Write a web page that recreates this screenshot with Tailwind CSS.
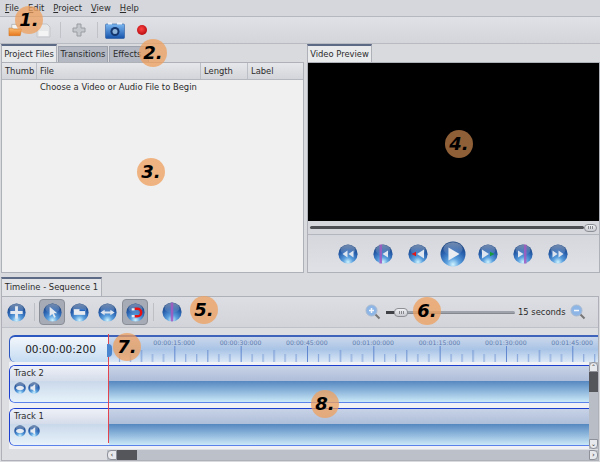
<!DOCTYPE html>
<html lang="en">
  <head>
    <meta charset="UTF-8" />
    <title>Timeline Editor</title>
    <script src="https://cdn.jsdelivr.net/npm/@tailwindcss/browser@4"></script>
  </head>
  <body class="m-0">
    <!-- shared icons -->
    <svg class="absolute w-0 h-0" aria-hidden="true">
      <defs>
        <radialGradient id="ballFill" cx="50%" cy="92%" r="85%">
          <stop offset="0" stop-color="#d0f4ff" />
          <stop offset="0.3" stop-color="#5ba0de" />
          <stop offset="0.68" stop-color="#2a62b0" />
          <stop offset="1" stop-color="#16407f" />
        </radialGradient>
        <linearGradient id="ballShine" x1="0" y1="0" x2="0" y2="1">
          <stop offset="0" stop-color="#fff" stop-opacity="0.4" />
          <stop offset="1" stop-color="#fff" stop-opacity="0.03" />
        </linearGradient>
        <linearGradient id="folderFill" x1="0" y1="0" x2="0" y2="1">
          <stop offset="0" stop-color="#fbbf72" />
          <stop offset="1" stop-color="#e8761c" />
        </linearGradient>
        <linearGradient id="cameraFill" x1="0" y1="0" x2="0" y2="1">
          <stop offset="0" stop-color="#7db8f0" />
          <stop offset="1" stop-color="#1553ab" />
        </linearGradient>
        <radialGradient id="recordFill" cx="45%" cy="40%" r="60%">
          <stop offset="0" stop-color="#f44" />
          <stop offset="1" stop-color="#b80c10" />
        </radialGradient>
        <pattern id="rulerTicks" x="0" y="0" width="66.33" height="16" patternUnits="userSpaceOnUse">
          <path d="M0.5 0V16" stroke="#5f86cf" />
          <path d="M11.5 8V16M22.5 8V16M44.5 8V16M55.5 8V16" stroke="#7c9ed8" />
          <path d="M33.5 4V16" stroke="#6c92d2" />
        </pattern>
        <symbol id="ball" viewBox="0 0 20 20">
          <circle cx="10" cy="10" r="9.6" fill="url(#ballFill)" />
          <ellipse cx="10" cy="6" rx="7.5" ry="5" fill="url(#ballShine)" />
        </symbol>
      </defs>
    </svg>

    <div class="relative w-[600px] h-[462px] overflow-hidden bg-[#d8dade] text-[#2b2b2b] text-[8.4px] leading-none whitespace-nowrap font-['DejaVu_Sans',sans-serif]">
      <!-- menu -->
      <div class="h-[17px] flex items-center pl-[5px] gap-[9px] bg-[#d5d7dc] border-b border-[#b5b8be]">
        <span><u>F</u>ile</span>
        <span><u>E</u>dit</span>
        <span><u>P</u>roject</span>
        <span><u>V</u>iew</span>
        <span><u>H</u>elp</span>
      </div>

      <!-- main toolbar -->
      <div class="h-[27px] flex items-center pl-[8px] border-b border-[#b8bbc1] bg-gradient-to-b from-[#dfe1e6] to-[#d3d5da]">
        <svg class="w-[15px] h-[14px]" viewBox="0 0 16 14">
          <path d="M4 1h5l1 2h3v3H4z" fill="#f4f4f2" stroke="#999" stroke-width="0.6" />
          <path d="M1 5h4l1 1h8.500l-1.500 7H1z" fill="url(#folderFill)" stroke="#c8701c" stroke-width="0.5" />
        </svg>
        <svg class="ml-[13px] w-[15px] h-[15px]" viewBox="0 0 15 15">
          <path d="M1 1h10l3 3v10H1z" fill="#e6e7e9" stroke="#c3c5c9" />
          <path d="M3 8h9v5H3z" fill="#f4f4f5" />
        </svg>
        <div class="ml-[9px] w-px h-[16px] bg-[#bfc2c8]"></div>
        <svg class="ml-[11px] w-[14px] h-[14px]" viewBox="0 0 14 14">
          <path d="M5 1h4v4h4v4H9v4H5V9H1V5h4z" fill="#c4c7cb" stroke="#9a9da3" />
        </svg>
        <div class="ml-[11px] w-px h-[16px] bg-[#bfc2c8]"></div>
        <svg class="ml-[7px] w-[20px] h-[17px]" viewBox="0 0 20 17">
          <rect x="0.500" y="2" width="19" height="14.500" rx="1" fill="url(#cameraFill)" stroke="#1b4c97" stroke-width="0.5" />
          <rect x="3" y="0.500" width="4" height="2" fill="#eef2f8" />
          <rect x="12" y="0.500" width="5" height="2" fill="#eef2f8" />
          <circle cx="10" cy="9.500" r="4.500" fill="#14366f" />
          <circle cx="10" cy="9.500" r="2.500" fill="#8db3d9" />
        </svg>
        <svg class="ml-[12px] w-[10px] h-[10px]" viewBox="0 0 10 10">
          <circle cx="5" cy="5" r="5" fill="url(#recordFill)" />
        </svg>
      </div>

      <!-- upper panes -->
      <div class="h-[229px] flex">
        <div class="w-[303px] ml-px flex flex-col">
          <div class="h-[18px] flex items-end gap-px">
            <div class="h-[18px] w-[56px] flex items-center justify-center bg-[#e9eaec] border-t-2 border-x border-t-[#5d6a86] border-x-[#aeb1b8]">Project Files</div>
            <div class="h-[16px] w-[50px] flex items-center justify-center bg-[#b3b8c3] border-x border-t border-[#9da2ad]">Transitions</div>
            <div class="h-[16px] w-[40px] flex items-center pl-[3px] bg-[#b3b8c3] border-x border-t border-[#9da2ad]">Effects</div>
          </div>
          <div class="flex-1 flex flex-col bg-[#f0f0f0] border border-[#aeb1b8]">
            <div class="h-[17px] flex items-center bg-gradient-to-b from-[#e6e7ea] to-[#d3d5da] border-b border-[#b5b8be]">
              <div class="w-[34px] pl-[3px]">Thumb</div>
              <div class="w-[164px] pl-[3px] border-l border-[#bcbfc5] h-full flex items-center">File</div>
              <div class="w-[47px] pl-[3px] border-l border-[#bcbfc5] h-full flex items-center">Length</div>
              <div class="pl-[3px] border-l border-[#bcbfc5] h-full flex items-center">Label</div>
            </div>
            <div class="pl-[38px] pt-[3px]">Choose a Video or Audio File to Begin</div>
          </div>
        </div>

        <div class="w-[293px] ml-[3px] flex flex-col">
          <div class="h-[18px] flex">
            <div class="w-[65px] flex items-center justify-center bg-[#e9eaec] border-t-2 border-x border-t-[#5d6a86] border-x-[#aeb1b8]">Video Preview</div>
          </div>
          <div class="flex-1 flex flex-col border border-[#aeb1b8] bg-[#dadce1]">
            <div class="h-[158px] bg-black"></div>
            <div class="relative h-[14px] flex items-center px-[2px] bg-[#d5d7dc] border-b border-[#b3b6bd]">
              <div class="w-[275px] h-[3px] rounded-sm bg-[#4d4f54]"></div>
              <div class="w-[13px] h-[8px] flex items-center justify-center gap-px rounded-sm border border-[#8c8f96] bg-gradient-to-b from-[#f0f1f3] to-[#c8cad0]">
                <i class="w-px h-[3px] bg-[#85888f]"></i><i class="w-px h-[3px] bg-[#85888f]"></i><i class="w-px h-[3px] bg-[#85888f]"></i>
              </div>
            </div>
            <div class="flex-1 flex items-center pl-[30px] gap-[15px] bg-gradient-to-b from-[#d5d7dc] to-[#dfe1e6]">
              <svg class="w-[20px] h-[20px]" viewBox="0 0 20 20"><use href="#ball" /><path d="M9.500 6.500 4.500 10l5 3.500zM15.500 6.500 10.500 10l5 3.500z" fill="#dfe6ef" /></svg>
              <svg class="w-[20px] h-[20px]" viewBox="0 0 20 20"><use href="#ball" /><path d="M15 6.500 9.500 10l5.500 3.500z" fill="#dfe6ef" /><rect x="6.500" y="0.500" width="2.500" height="19" fill="#a25ac0" opacity="0.85" /></svg>
              <svg class="w-[20px] h-[20px]" viewBox="0 0 20 20"><use href="#ball" /><path d="M16 5.500 9 10l7 4.500z" fill="#dfe6ef" /><path d="M3.500 10 8 7.800V12.200z" fill="#e01818" /></svg>
              <svg class="-mx-[3px] w-[26px] h-[26px]" viewBox="0 0 20 20"><use href="#ball" /><path d="M6.500 5v10L15 10z" fill="#e9edf2" /></svg>
              <svg class="w-[20px] h-[20px]" viewBox="0 0 20 20"><use href="#ball" /><path d="M4 5.500 11 10l-7 4.500z" fill="#dfe6ef" /><path d="M16.500 10 12 7.800V12.200z" fill="#169a3a" /></svg>
              <svg class="w-[20px] h-[20px]" viewBox="0 0 20 20"><use href="#ball" /><path d="M5 6.500 10.500 10 5 13.500z" fill="#dfe6ef" /><rect x="11" y="0.500" width="2.500" height="19" fill="#a25ac0" opacity="0.85" /></svg>
              <svg class="w-[20px] h-[20px]" viewBox="0 0 20 20"><use href="#ball" /><path d="M4.500 6.500 9.500 10l-5 3.500zM10.500 6.500l5 3.500-5 3.500z" fill="#dfe6ef" /></svg>
            </div>
          </div>
        </div>
      </div>

      <!-- timeline -->
      <div class="mt-[4px] ml-px w-[598px]">
        <div class="h-[19px] w-[101px] flex items-center justify-center bg-[#e3e4e7] border-t-2 border-x border-t-[#5d6a86] border-x-[#aeb1b8]">Timeline - Sequence 1</div>
        <div class="relative h-[165px] border border-[#aeb1b8] bg-[#dcdee2]">
          <div class="h-[31px] flex items-center pl-[5px] bg-gradient-to-b from-[#dcdee3] to-[#d2d4d9] border-b border-[#bec1c7]">
            <svg class="w-[19px] h-[19px]" viewBox="0 0 20 20"><use href="#ball" /><path d="M8.500 3.500h3v5h5v3h-5v5h-3v-5h-5v-3h5z" fill="#e4e9f0" /></svg>
            <div class="ml-[8px] w-px h-[18px] bg-[#bcbfc5]"></div>
            <div class="ml-[4px] w-[26px] h-[26px] flex items-center justify-center rounded-sm bg-[#a6abb5] border border-[#8a8e97]">
              <svg class="w-[19px] h-[19px]" viewBox="0 0 20 20"><use href="#ball" /><path d="M7 4v10l2.800-2.400 2 4 1.700-.8-2-3.900H15z" fill="#e4e9f0" /></svg>
            </div>
            <svg class="ml-[5px] w-[19px] h-[19px]" viewBox="0 0 20 20"><use href="#ball" /><path d="M4 6.500h12v6H4z" fill="#e8ecf1" /><path d="M10 6.500h6v2h-6z" fill="#2565bd" /></svg>
            <svg class="ml-[9px] w-[19px] h-[19px]" viewBox="0 0 20 20"><use href="#ball" /><path d="M2.500 10 7 7v2h6V7l4.500 3-4.500 3v-2H7v2z" fill="#dfe5ee" /></svg>
            <div class="ml-[5px] w-[26px] h-[26px] flex items-center justify-center rounded-sm bg-[#a6abb5] border border-[#8a8e97]">
              <svg class="w-[19px] h-[19px]" viewBox="0 0 20 20"><use href="#ball" /><path d="M9 6h3a4 4 0 0 1 0 8H9" fill="none" stroke="#e81010" stroke-width="2.600" /><path d="M6 5.500h3v2.500H6zM6 12.500h3V15H6z" fill="#e8ecf1" /></svg>
            </div>
            <div class="ml-[5px] w-px h-[18px] bg-[#bcbfc5]"></div>
            <svg class="ml-[8px] w-[20px] h-[20px]" viewBox="0 0 20 20"><use href="#ball" /><rect x="8.700" y="0.500" width="2.600" height="19" rx="1.300" fill="#a25ac0" opacity="0.9" /></svg>
            <svg class="ml-[183px] w-[16px] h-[16px]" viewBox="0 0 16 16">
              <path d="M9.500 9.500l5 5" stroke="#777" stroke-width="2" />
              <circle cx="6.500" cy="6.500" r="5.500" fill="#8db6e6" stroke="#a9b9cf" />
              <path d="M4 6.500h5M6.500 4v5" stroke="#f3f6fa" stroke-width="1.500" />
            </svg>
            <div class="ml-[5px] relative w-[129px] h-[9px] flex items-center">
              <div class="w-full h-[3px] rounded-sm bg-[#9ea2aa] border-b border-[#85888f]"></div>
              <div class="absolute left-0 w-[8px] h-[3px] bg-[#3f4147]"></div>
              <div class="absolute left-[8px] w-[14px] h-[9px] flex items-center justify-center gap-px rounded-sm border border-[#8c8f96] bg-gradient-to-b from-[#f0f1f3] to-[#c8cad0]">
                <i class="w-px h-[3px] bg-[#85888f]"></i><i class="w-px h-[3px] bg-[#85888f]"></i><i class="w-px h-[3px] bg-[#85888f]"></i>
              </div>
            </div>
            <span class="ml-[3px]">15 seconds</span>
            <svg class="ml-[4px] w-[16px] h-[16px]" viewBox="0 0 16 16">
              <path d="M9.500 9.500l5 5" stroke="#777" stroke-width="2" />
              <circle cx="6.500" cy="6.500" r="5.500" fill="#8db6e6" stroke="#a9b9cf" />
              <path d="M4 6.500h5" stroke="#f3f6fa" stroke-width="1.500" />
            </svg>
          </div>

          <div class="pl-[7px] pt-[7px]">
            <!-- ruler row -->
            <div class="h-[27px] flex">
              <div class="w-[99px] shrink-0 flex items-center justify-center pl-[3px] rounded-l-md border-t-2 border-l border-[#2d57c0] bg-gradient-to-b from-[#f3f6fb] to-[#c5dcf2] text-[10.5px] text-[#1a1a1a]">00:00:00:200</div>
              <div class="relative flex-1 min-w-0 overflow-hidden border-t-2 border-[#3f62ba] bg-gradient-to-b from-[#cbd7ea] via-[#a9c4e6] to-[#dbe8f6]">
                <div class="pl-[33px] pt-[3px] flex text-[6.2px] text-[#5e7cae]">
                  <span class="w-[66.33px] shrink-0 text-center">00:00:15:000</span>
                  <span class="w-[66.33px] shrink-0 text-center">00:00:30:000</span>
                  <span class="w-[66.33px] shrink-0 text-center">00:00:45:000</span>
                  <span class="w-[66.33px] shrink-0 text-center">00:01:00:000</span>
                  <span class="w-[66.33px] shrink-0 text-center">00:01:15:000</span>
                  <span class="w-[66.33px] shrink-0 text-center">00:01:30:000</span>
                  <span class="w-[66.33px] shrink-0 text-center">00:01:45:000</span>
                </div>
                <svg class="absolute left-0 bottom-0 w-[490px] h-[16px]"><rect width="490" height="16" fill="url(#rulerTicks)" /></svg>
              </div>
            </div>

            <!-- tracks + vertical scrollbar -->
            <div class="h-[87px] flex">
              <div class="w-[580px] pt-[3px] flex flex-col gap-[5px] bg-[#eff1f5]">
                <div class="h-[38px] flex rounded-l-md border-y border-l border-t-[#1c3fcf] border-l-[#1c3fcf] border-b-[#5b82ea] overflow-hidden">
                  <div class="w-[99px] flex flex-col">
                    <div class="h-[15px] flex items-center pl-[4px] bg-gradient-to-b from-[#eef1f7] to-[#d5dcea]">Track 2</div>
                    <div class="flex-1 flex items-start pl-[4px] pt-[1px] gap-[2px] bg-gradient-to-b from-[#c9d8ea] to-[#e7f2fa]">
                      <svg class="w-[12px] h-[12px]" viewBox="0 0 20 20"><use href="#ball" /><path d="M3 10c3-5 11-5 14 0-3 5-11 5-14 0z" fill="#e6ebf2" /></svg>
                      <svg class="w-[12px] h-[12px]" viewBox="0 0 20 20"><use href="#ball" /><path d="M4 7.500h3l5-4v13l-5-4H4z" fill="#e6ebf2" /></svg>
                    </div>
                  </div>
                  <div class="flex-1 flex flex-col">
                    <div class="h-[15px] bg-gradient-to-b from-[#c8d3e6] to-[#aebdd9]"></div>
                    <div class="flex-1 bg-gradient-to-b from-[#5587c0] to-[#cbe9f7]"></div>
                  </div>
                </div>
                <div class="h-[38px] flex rounded-l-md border-y border-l border-t-[#1c3fcf] border-l-[#1c3fcf] border-b-[#5b82ea] overflow-hidden">
                  <div class="w-[99px] flex flex-col">
                    <div class="h-[15px] flex items-center pl-[4px] bg-gradient-to-b from-[#eef1f7] to-[#d5dcea]">Track 1</div>
                    <div class="flex-1 flex items-start pl-[4px] pt-[1px] gap-[2px] bg-gradient-to-b from-[#c9d8ea] to-[#e7f2fa]">
                      <svg class="w-[12px] h-[12px]" viewBox="0 0 20 20"><use href="#ball" /><path d="M3 10c3-5 11-5 14 0-3 5-11 5-14 0z" fill="#e6ebf2" /></svg>
                      <svg class="w-[12px] h-[12px]" viewBox="0 0 20 20"><use href="#ball" /><path d="M4 7.500h3l5-4v13l-5-4H4z" fill="#e6ebf2" /></svg>
                    </div>
                  </div>
                  <div class="flex-1 flex flex-col">
                    <div class="h-[15px] bg-gradient-to-b from-[#c8d3e6] to-[#aebdd9]"></div>
                    <div class="flex-1 bg-gradient-to-b from-[#5587c0] to-[#cbe9f7]"></div>
                  </div>
                </div>
              </div>
              <div class="w-[9px] flex flex-col bg-[#b9bdc6]">
                <div class="h-[10px] flex items-center justify-center rounded-t-sm border border-[#8e9199] bg-[#e8e9ec] text-[6px]">&#8963;</div>
                <div class="h-[20px] bg-[#54565b]"></div>
                <div class="flex-1"></div>
                <div class="h-[10px] flex items-center justify-center rounded-b-sm border border-[#8e9199] bg-[#e8e9ec] text-[6px]">&#8964;</div>
              </div>
            </div>

            <!-- horizontal scrollbar -->
            <div class="ml-[98px] mt-[1px] h-[10px] flex bg-[#bcc0c8]">
              <div class="w-[10px] flex items-center justify-center rounded-l-sm border border-[#8e9199] bg-[#e8e9ec] text-[7px]">&#8249;</div>
              <div class="w-[20px] bg-[#54565b]"></div>
              <div class="flex-1"></div>
              <div class="w-[9px] flex items-center justify-center rounded-r-sm border border-[#8e9199] bg-[#e8e9ec] text-[7px]">&#8250;</div>
            </div>
          </div>
        </div>
      </div>

      <!-- playhead -->
      <div class="absolute left-[108px] top-[334px] w-px h-[109px] bg-[#e2454f]"></div>
      <div class="absolute left-[107px] top-[344px] w-[5px] h-[13px] rounded-r-sm bg-[#4a86cf]"></div>

      <!-- callout badges -->
      <div class="absolute left-[15px] top-[6px] w-[28px] h-[28px] rounded-full bg-[#ef9f5c]/75 flex items-center justify-center text-[18px] font-bold italic text-black">1.</div>
      <div class="absolute left-[139px] top-[39px] w-[28px] h-[28px] rounded-full bg-[#ef9f5c]/75 flex items-center justify-center text-[18px] font-bold italic text-black">2.</div>
      <div class="absolute left-[137px] top-[158px] w-[28px] h-[28px] rounded-full bg-[#ef9f5c]/75 flex items-center justify-center text-[18px] font-bold italic text-black">3.</div>
      <div class="absolute left-[445px] top-[130px] w-[28px] h-[28px] rounded-full bg-[#ef9f5c]/60 flex items-center justify-center text-[18px] font-bold italic text-black">4.</div>
      <div class="absolute left-[190px] top-[296px] w-[28px] h-[28px] rounded-full bg-[#ef9f5c]/75 flex items-center justify-center text-[18px] font-bold italic text-black">5.</div>
      <div class="absolute left-[413px] top-[297px] w-[28px] h-[28px] rounded-full bg-[#ef9f5c]/75 flex items-center justify-center text-[18px] font-bold italic text-black">6.</div>
      <div class="absolute left-[113px] top-[333px] w-[28px] h-[28px] rounded-full bg-[#ef9f5c]/75 flex items-center justify-center text-[18px] font-bold italic text-black">7.</div>
      <div class="absolute left-[311px] top-[390px] w-[28px] h-[28px] rounded-full bg-[#ef9f5c]/75 flex items-center justify-center text-[18px] font-bold italic text-black">8.</div>
    </div>
  </body>
</html>
